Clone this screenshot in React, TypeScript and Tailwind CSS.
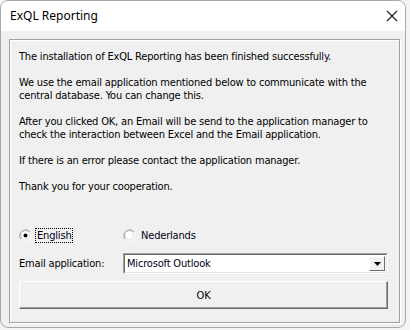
import React from "react";

const bodyFont = { fontFamily: '"DejaVu Sans Condensed", "DejaVu Sans", sans-serif' };

function Radio({ checked }: { checked?: boolean }) {
  return (
    <svg width="13" height="13" viewBox="0 0 13 13" className="shrink-0">
      <path d="M11.2 2.8 A6 6 0 0 0 1.8 10.2" fill="none" stroke="#a0a0a0" strokeWidth="1" />
      <path d="M10.2 3.8 A4.6 4.6 0 0 0 2.8 9.2" fill="none" stroke="#696969" strokeWidth="1" />
      <circle cx="6.5" cy="6.5" r="4.5" fill="#fff" />
      <path d="M1.8 10.2 A6 6 0 0 0 11.2 2.8" fill="none" stroke="#fff" strokeWidth="1" />
      <path d="M2.8 9.2 A4.6 4.6 0 0 0 10.2 3.8" fill="none" stroke="#e3e3e3" strokeWidth="1" />
      {checked && <circle cx="6.5" cy="6.5" r="2" fill="#000" />}
    </svg>
  );
}

export default function App() {
  return (
    <div className="w-[410px] h-[330px] bg-[#f4f4f4]">
      <div className="w-[406px] h-[328px] rounded-[8px] border border-[#a8a8a8] bg-[#f0f0f0] overflow-hidden flex flex-col">
        <div className="h-[30px] bg-white flex items-center justify-between pl-[9px] pr-[6px] shrink-0">
          <span className="text-[12px] text-black" style={{ fontFamily: '"Noto Sans", "Open Sans", sans-serif' }}>
            ExQL Reporting
          </span>
          <svg width="12" height="12" viewBox="0 0 12 12" className="mr-[1px]">
            <path d="M1 1 L11 11 M11 1 L1 11" stroke="#1a1a1a" strokeWidth="1.1" />
          </svg>
        </div>
        <div className="flex-1 pt-[8px] pl-[8px] pr-[5px] pb-[4px]">
          <div
            className="h-full border border-[#a0a0a0] shadow-[inset_1px_1px_0_#ffffff,1px_1px_0_#ffffff] flex flex-col pl-[9px] pr-[11px] pt-[10px] text-[11px] tracking-[-0.18px] text-black"
            style={bodyFont}
          >
            <p className="leading-[13px] mb-[13px]">
              The installation of ExQL Reporting has been finished successfully.
            </p>
            <p className="leading-[13px] mb-[13px]">
              We use the email application mentioned below to communicate with the
              <br />
              central database. You can change this.
            </p>
            <p className="leading-[13px] mb-[13px]">
              After you clicked OK, an Email will be send to the application manager to
              <br />
              check the interaction between Excel and the Email application.
            </p>
            <p className="leading-[13px] mb-[13px]">If there is an error please contact the application manager.</p>
            <p className="leading-[13px]">Thank you for your cooperation.</p>

            <div className="flex items-center mt-[34px] h-[17px]">
              <div className="flex items-center w-[104px]">
                <Radio checked />
                <span className="ml-[4px] px-[1px] leading-[13px] outline outline-1 outline-dotted outline-black text-[#000018]">
                  English
                </span>
              </div>
              <div className="flex items-center">
                <Radio />
                <span className="ml-[5px] leading-[13px] text-[#000018]">Nederlands</span>
              </div>
            </div>

            <div className="flex items-center mt-[9px]">
              <span className="w-[104px] leading-[13px]">Email application:</span>
              <div className="flex-1 h-[21px] bg-white border-t border-l border-[#a0a0a0] border-r-[#ffffff] border-b-[#ffffff] border-r border-b">
                <div className="h-full border-t border-l border-[#696969] border-r border-b border-r-[#e3e3e3] border-b-[#e3e3e3] flex items-center">
                  <span className="pl-[2px] flex-1 text-[#000018] leading-[13px]">Microsoft Outlook</span>
                  <div className="w-[16px] h-[15px] bg-[#f0f0f0] border border-t-[#ffffff] border-l-[#ffffff] border-r-[#696969] border-b-[#696969] flex items-center justify-center mr-[1px]">
                    <svg width="7" height="4" viewBox="0 0 7 4">
                      <path d="M0 0 H7 L3.5 4 Z" fill="#000" />
                    </svg>
                  </div>
                </div>
              </div>
            </div>

            <div className="mt-[7px] h-[28px] bg-[#f0f0f0] border border-t-[#ffffff] border-l-[#ffffff] border-r-[#696969] border-b-[#696969] shadow-[inset_-1px_-1px_0_#a0a0a0] flex items-center justify-center">
              <span className="leading-[13px]">OK</span>
            </div>
          </div>
        </div>
      </div>
    </div>
  );
}
